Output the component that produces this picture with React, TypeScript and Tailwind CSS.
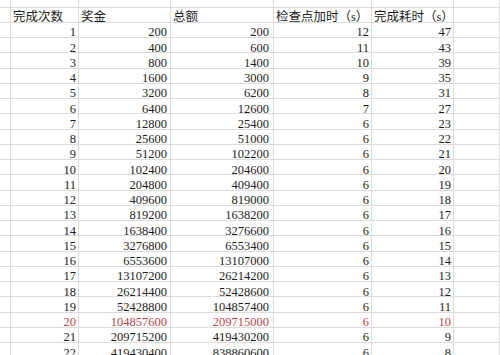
import React from "react"

type Row = {
    n: number
    bonus: number
    total: number
    extra: number
    time: number
}

// bonus doubles every run, total is the running sum
const rows: Row[] = Array.from({ length: 22 }, (_, i) => {
    const n = i + 1
    const bonus = 200 * 2 ** i
    const total = 200 * (2 ** n - 1)
    const extra = n <= 6 ? 13 - n : 6
    const time = n <= 6 ? 51 - 4 * n : 30 - n
    return { n, bonus, total, extra, time }
})

const rowCls =
    "grid grid-cols-[11px_68px_92px_103px_98px_82px_1fr] h-[15.25px] shrink-0"
const cell = "border-r border-b border-[#dcdcdc] overflow-hidden whitespace-nowrap leading-[15px] pt-[2.5px]"

function Cell({ children, right, pr = "pr-[2px]" }: { children?: React.ReactNode; right?: boolean; pr?: string }) {
    return (
        <div className={`${cell} ${right ? `text-right ${pr}` : "pl-[2px]"}`}>
            {children}
        </div>
    )
}

export default function App() {
    return (
        <div
            className="w-[500px] h-[355px] overflow-hidden bg-white text-[#1e1e1e] text-[12.5px] flex flex-col"
            style={{ fontFamily: '"Liberation Serif", "Noto Sans CJK SC", serif' }}
        >
            {/* partial row above the header */}
            <div className="grid grid-cols-[11px_68px_92px_103px_98px_82px_1fr] h-[7.5px] shrink-0">
                {Array.from({ length: 7 }).map((_, i) => (
                    <div key={i} className="border-r border-b border-[#dcdcdc]" />
                ))}
            </div>

            <div className={rowCls}>
                <Cell />
                <Cell>完成次数</Cell>
                <Cell>奖金</Cell>
                <Cell>总额</Cell>
                <Cell>检查点加时（s）</Cell>
                <Cell>完成耗时（s）</Cell>
                <Cell />
            </div>

            {rows.map((r) => (
                <div key={r.n} className={`${rowCls} ${r.n === 20 ? "text-[#b8454c]" : ""}`}>
                    <Cell />
                    <Cell right>{r.n}</Cell>
                    <Cell right pr="pr-[3px]">{r.bonus}</Cell>
                    <Cell right pr="pr-[4px]">{r.total}</Cell>
                    <Cell right>{r.extra}</Cell>
                    <Cell right>{r.time}</Cell>
                    <Cell />
                </div>
            ))}
        </div>
    )
}
